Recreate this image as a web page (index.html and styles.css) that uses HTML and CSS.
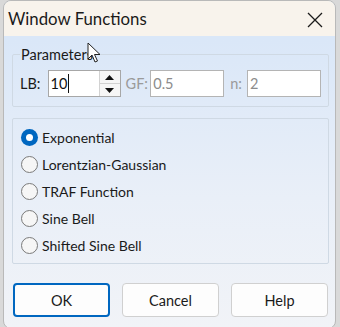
FILE: index.html
```html
<!DOCTYPE html>
<html lang="en">
<head>
<meta charset="utf-8"/>
<title>Window Functions</title>
<link rel="stylesheet" href="styles.css">
</head>
<body>
<div class="window">
  <div class="titlebar">
    <span class="title">Window Functions</span>
    <svg class="close" width="16" height="16" viewBox="0 0 16 16">
      <path d="M1 1 L15 15 M15 1 L1 15" stroke="#1b1b1b" stroke-width="1.3" fill="none"/>
    </svg>
  </div>
  <div class="content">
    <fieldset class="group params">
      <legend>Parameters</legend>
      <div class="param-row">
        <label class="lbl lbl-lb">LB:</label>
        <div class="field spin">
          <span class="value">10</span><span class="caret"></span>
          <div class="spin-btns">
            <div class="spin-btn"><svg width="9" height="5" viewBox="0 0 9 5"><path d="M0 5 L4.5 0 L9 5 Z" fill="#111"/></svg></div>
            <div class="spin-btn"><svg width="9" height="5" viewBox="0 0 9 5"><path d="M0 0 L4.5 5 L9 0 Z" fill="#111"/></svg></div>
          </div>
        </div>
        <label class="lbl lbl-gf off">GF:</label>
        <div class="field off"><span class="value">0.5</span></div>
        <label class="lbl lbl-n off">n:</label>
        <div class="field off"><span class="value">2</span></div>
      </div>
    </fieldset>

    <fieldset class="group choices">
      <div class="radio-row"><span class="radio checked"></span>Exponential</div>
      <div class="radio-row"><span class="radio"></span>Lorentzian-Gaussian</div>
      <div class="radio-row"><span class="radio"></span>TRAF Function</div>
      <div class="radio-row"><span class="radio"></span>Sine Bell</div>
      <div class="radio-row"><span class="radio"></span>Shifted Sine Bell</div>
    </fieldset>

    <div class="buttons">
      <button class="btn default">OK</button>
      <button class="btn">Cancel</button>
      <button class="btn">Help</button>
    </div>
  </div>
  <svg class="pointer" width="14" height="22" viewBox="0 0 14 22">
    <path d="M1 1 L1 17 L5 13 L8 20 L10.5 19 L7.5 12.5 L13 12.5 Z" fill="#fff" stroke="#222" stroke-width="1" stroke-linejoin="round"/>
  </svg>
</div>
</body>
</html>
```
FILE: styles.css
```css
body {
    margin: 0;
    background: #d9d9d9;
    font-family: Lato, 'Noto Sans', sans-serif;
    color: #1a1a1a;
    width: 340px;
    height: 327px;
    overflow: hidden;
}
.window {
    position: relative;
    margin-left: 3px;
    width: 333px;
    height: 329px;
    box-sizing: border-box;
    border: 1px solid #b9b9b9;
    border-radius: 8px;
    overflow: hidden;
    background: linear-gradient(180deg, #dae7f8 12%, #e9eff8 60%, #f1f3f7);
}
.titlebar {
    height: 35px;
    background: #f8f3ec;
    display: flex;
    align-items: center;
    justify-content: space-between;
    padding: 0 12px 0 4px;
}
.title {
    font-size: 16.8px;
    margin-top: -1px;
}
.close {
    margin-top: 2px;
}
.content {
    padding: 0 6px 0 8px;
}
.group {
    margin: 0;
    border: 1px solid #cfd9e4;
    border-radius: 2px;
    min-width: 0;
}
.params {
    margin-top: 10px;
    padding: 7px 7px 9px;
}
.params legend {
    font-size: 14.5px;
    padding: 0 1px;
    line-height: 17px;
}
.param-row {
    display: flex;
    align-items: center;
    height: 27px;
}
.lbl {
    font-size: 14.5px;
}
.lbl-lb { width: 28px; }
.lbl-gf { width: 25px; margin-left: 5px; }
.lbl-n { width: 17px; margin-left: 6px; }
.off { color: #9a9a9a; }
.field {
    width: 75px;
    height: 27px;
    box-sizing: border-box;
    background: #fff;
    border: 1px solid #a7a7a7;
    display: flex;
    align-items: center;
    padding-left: 2px;
    font-size: 14.5px;
}
.field.off {
    border-color: #b4b4b4;
    color: #8c8c8c;
}
.spin {
    width: 74px;
    position: relative;
    color: #111;
}
.caret {
    display: inline-block;
    width: 1px;
    height: 19px;
    background: #111;
    margin-left: 1px;
}
.spin-btns {
    position: absolute;
    right: 0;
    top: 0;
    bottom: 0;
    width: 20px;
    border-left: 1px solid #d2d2d2;
    display: flex;
    flex-direction: column;
}
.spin-btn {
    flex: 1;
    display: flex;
    align-items: center;
    justify-content: center;
    background: #f6f6f6;
}
.spin-btn + .spin-btn {
    border-top: 1px solid #d2d2d2;
}
.choices {
    margin-top: 11px;
    padding: 5px 7px 4px;
}
.radio-row {
    height: 27px;
    display: flex;
    align-items: center;
    font-size: 14px;
}
.radio {
    width: 17px;
    height: 17px;
    box-sizing: border-box;
    border-radius: 50%;
    border: 1px solid #7a7a7a;
    background: #f6f6f6;
    margin: 0 4px 0 1px;
    position: relative;
}
.radio.checked {
    border: none;
    background: #0067c0;
}
.radio.checked::after {
    content: "";
    position: absolute;
    left: 5px;
    top: 5px;
    width: 7px;
    height: 7px;
    border-radius: 50%;
    background: #fff;
}
.buttons {
    display: flex;
    gap: 12px;
    margin-top: 19px;
    padding-left: 1px;
}
.btn {
    width: 97px;
    height: 34px;
    background: #fdfdfd;
    border: 1px solid #d0d0d0;
    border-radius: 4px;
    font-family: Lato, 'Noto Sans', sans-serif;
    font-size: 14.5px;
    color: #1a1a1a;
    padding: 0;
}
.btn.default {
    border: 2px solid #0067c0;
}
.pointer {
    position: absolute;
    left: 83px;
    top: 41px;
}
```
